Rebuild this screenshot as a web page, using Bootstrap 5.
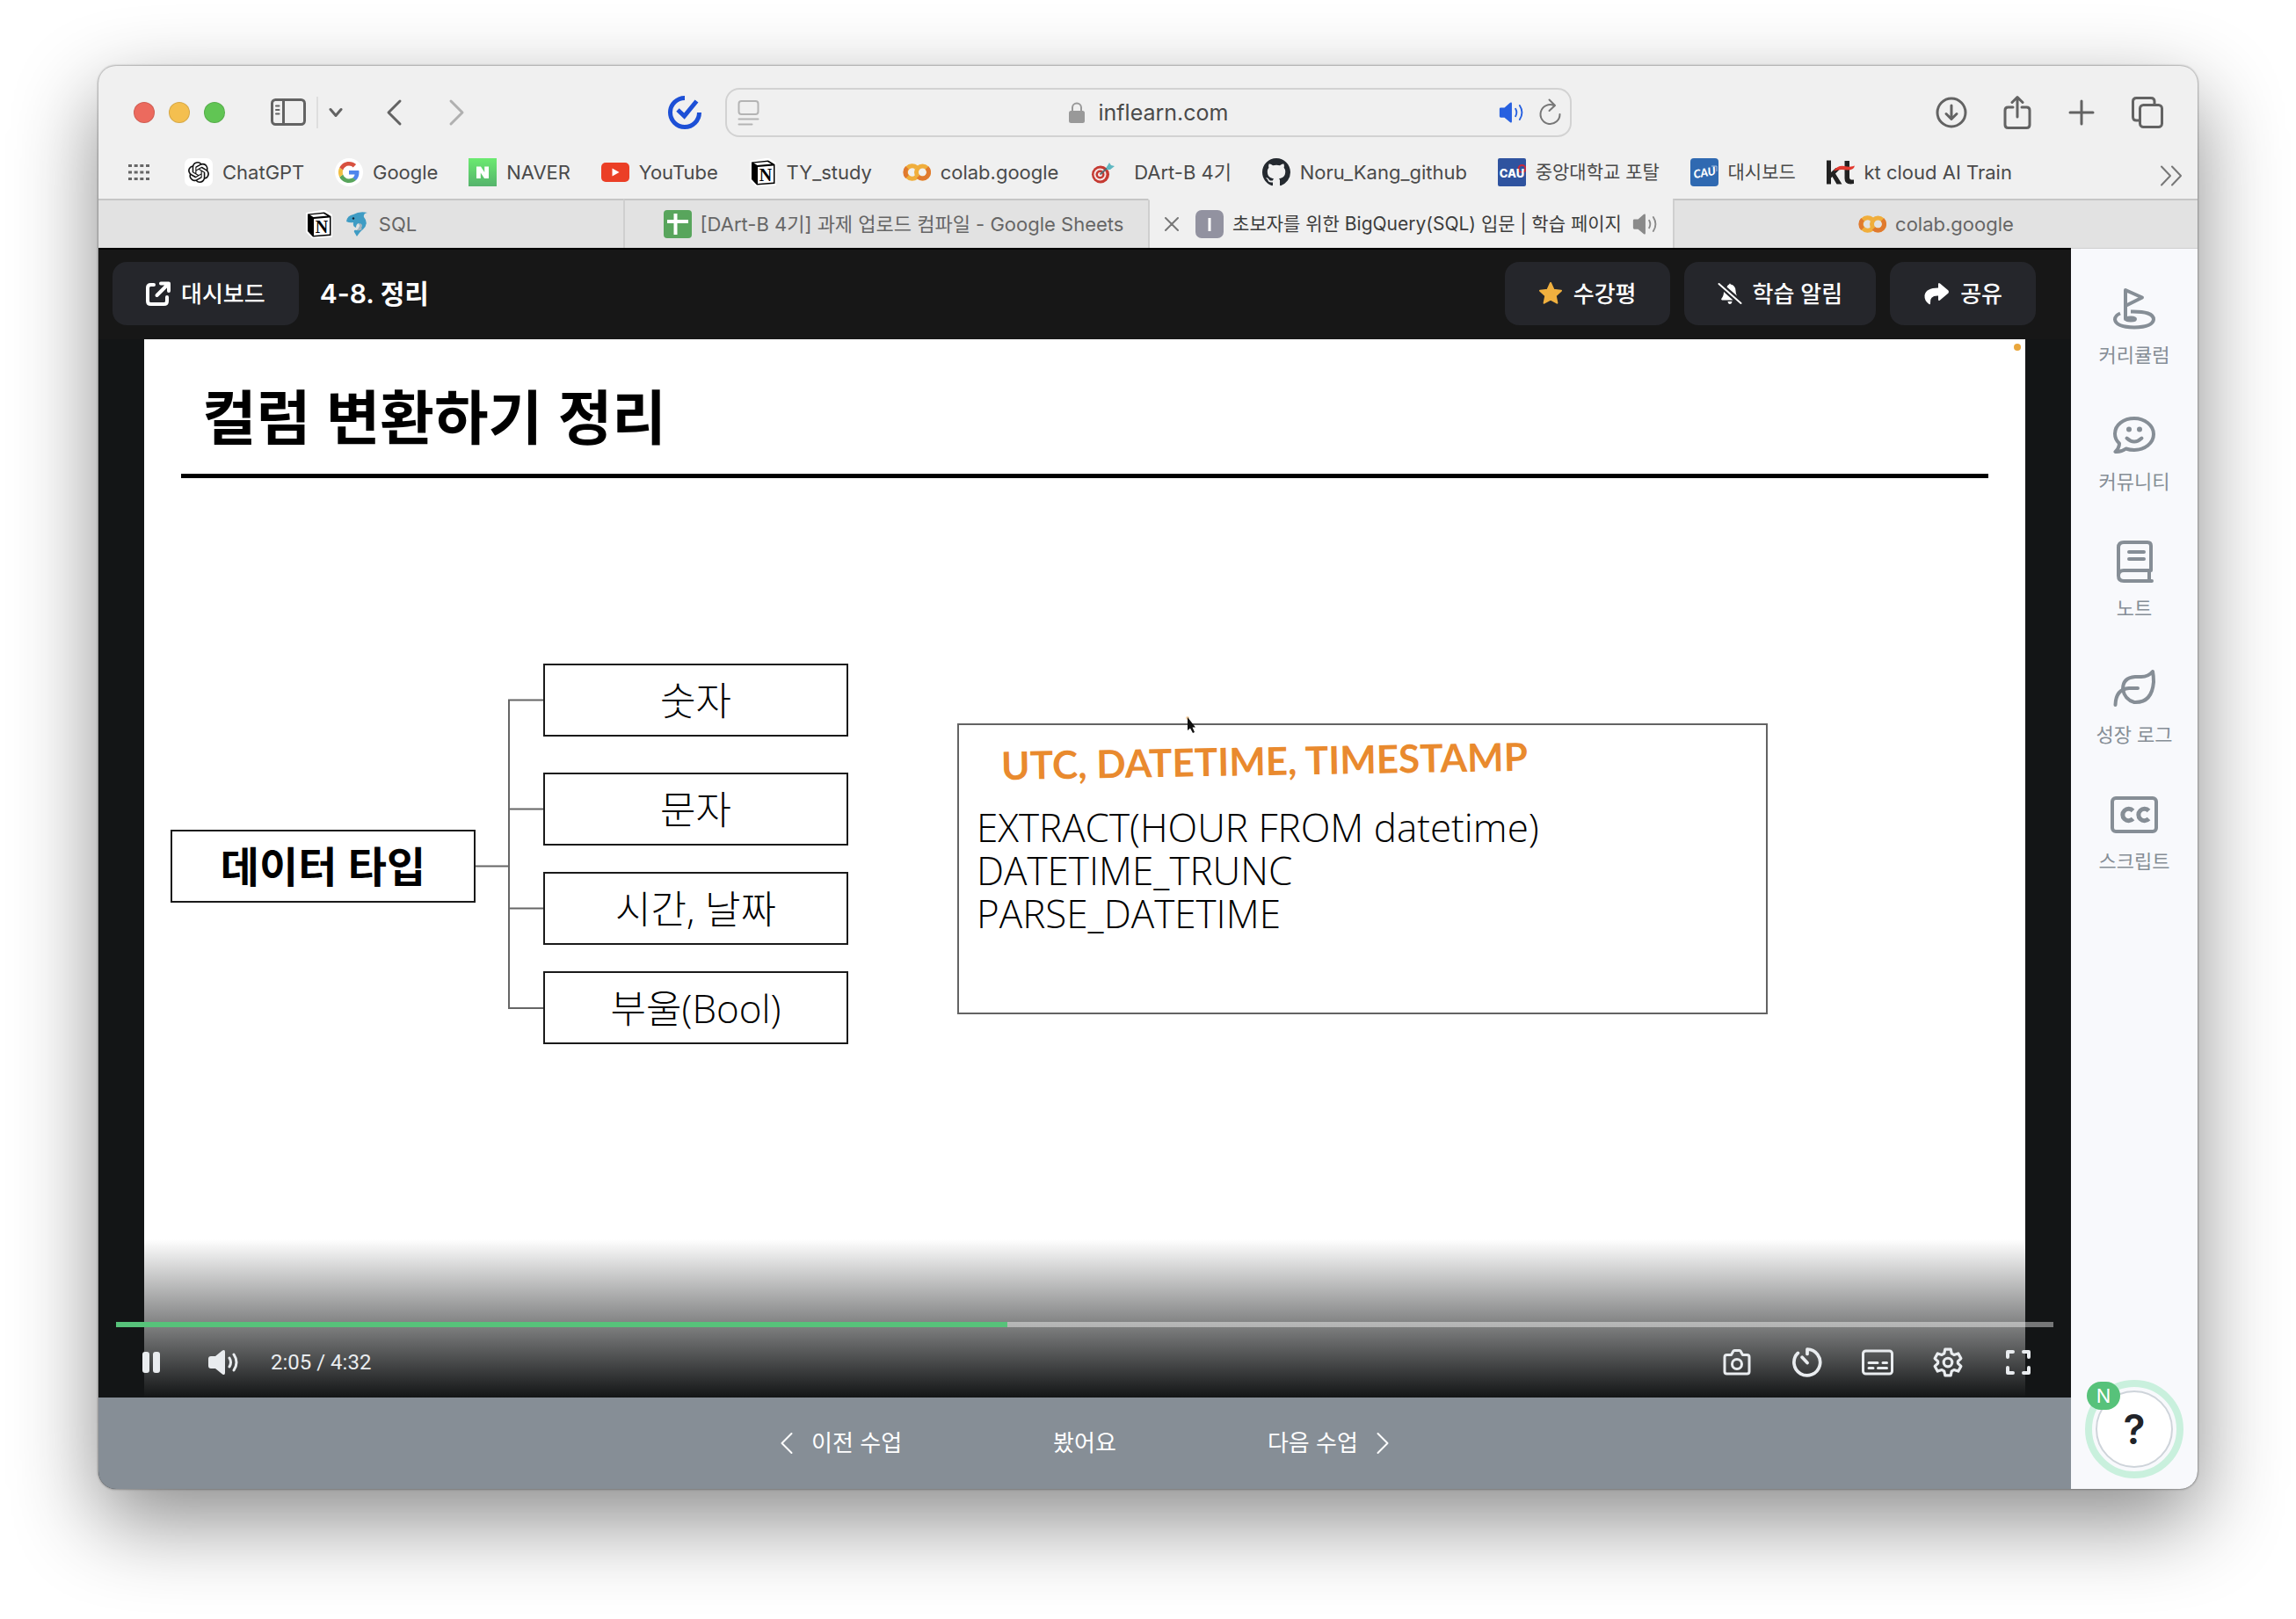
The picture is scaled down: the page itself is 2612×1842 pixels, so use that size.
<!DOCTYPE html>
<html lang="ko">
<head>
<meta charset="utf-8">
<meta name="viewport" content="width=device-width, initial-scale=1">
<title>초보자를 위한 BigQuery(SQL) 입문 | 학습 페이지</title>
<link href="https://cdn.jsdelivr.net/npm/bootstrap@5.3.0/dist/css/bootstrap.min.css" rel="stylesheet">
<style>
  body { background: #fff; font-family: "Inter", "Noto Sans CJK KR", sans-serif; font-size: 22px; line-height: 32px; color: #3c3c3c; }
  .desk { padding: 75px 112px 148px; }
  .win { border-radius: 20px; overflow: hidden; background: #f0f0f0; box-shadow: 0 0 2px 1px rgba(0,0,0,.28), 0 36px 96px rgba(0,0,0,.46); }
  svg { display: block; flex: none; }
  a { color: inherit; text-decoration: none; }
  .plain { background: none; border: 0; padding: 0; color: inherit; display: flex; align-items: center; }
  .ln { fill: none; stroke: currentColor; stroke-linecap: round; stroke-linejoin: round; }
  .hangul { font-size: 21px; }

  /* browser toolbar */
  .bar-top { height: 106px; padding: 0 39px 0 40px; color: #636363; }
  .bar-side { flex: 1 1 0; }
  .bar-end { gap: 41px; }
  .light { width: 24px; height: 24px; border-radius: 50%; border: 1px solid rgba(0,0,0,.12); }
  .split { width: 2px; height: 36px; margin: 0 8px 0 12px; background: #dedede; }
  .address { width: 963px; height: 56px; border: 2px solid #d2d2d2; border-radius: 16px; padding: 0 8px 0 12px; }
  .address input { width: 152px; border: 0; padding: 0; background: none; color: #4a4a4a; font-size: 25px; line-height: 32px; outline: 0; }
  .marks { height: 45px; padding: 0 17px 16px 34px; color: #4a4a4a; }
  .marks ul { margin: 0 168px 0 40px; }
  .marks a { gap: 11px; }
  .tabs a { height: 56px; flex: none; width: 25%; gap: 10px; background: #e2e2e2; color: #666; border-top: 2px solid #c6c6c6; border-left: 2px solid #cfcfcf; white-space: nowrap; }
  .tabs a:first-child { border-left: 0; }
  .tabs a.on { background: #f0f0f0; border-top-color: #f0f0f0; color: #3c3c3c; }

  /* lesson page */
  .lesson { background: #131516; }
  .head { background: #171717; height: 104px; padding: 0 40px 2px 16px; color: #fff; border-top: 2px solid #000; }
  .pill { height: 72px; border-radius: 16px; background: #25262b; border: 0; color: #fff; padding: 0 38px; gap: 12px; font-size: 26px; font-weight: 500; }
  .pill:hover { background: #2f3036; color: #fff; }
  .crumb { font-size: 30px; font-weight: 600; margin: 0 0 0 24px; }
  .stage { height: 1204px; padding: 0 52px; }
  .slide { height: 100%; background: #fff; color: #000; font-family: "Open Sans", "Noto Sans CJK KR", sans-serif; }
  .slide-title { margin: 0 42px; padding: 50px 24px 27px; border-bottom: 5px solid #000; font-size: 67px; line-height: 76px; font-weight: 700; }
  .board { padding: 211px 293px 0 30px; }
  .node { width: 347px; height: 83px; border: 2px solid #1a1a1a; font-size: 44px; font-weight: 300; }
  .node-root { margin-top: 189px; font-size: 48px; font-weight: 700; }
  .branches { gap: 30px; }
  .branches .node:first-child { margin-bottom: 11px; }
  .wire { stroke: #666; stroke-width: 2; fill: none; }
  .code { margin: 68px 0 0 124px; height: 331px; border: 2px solid #636363; padding: 12px 20px; font-size: 44px; line-height: 49px; font-weight: 300; }
  .ink { font-family: "Lato", "Open Sans", sans-serif; font-weight: 700; font-size: 44px; line-height: 52px; color: #e98a2e; padding: 0 28px; margin-bottom: 28px; transform: rotate(-1deg); }
  .pointer { position: absolute; left: 1188px; top: 427px; }
  .rec { position: absolute; right: 57px; top: 5px; width: 8px; height: 8px; border-radius: 50%; background: #e9a63c; }
  .shade { position: absolute; left: 0; right: 0; bottom: 0; height: 180px; padding: 94px 20px 0; background: linear-gradient(rgba(19,21,22,0), #131516); color: #e9ecef; }
  .seek { appearance: none; display: block; width: 100%; height: 6px; margin: 0; background: linear-gradient(to right, #57c27a var(--at), rgba(255,255,255,.42) var(--at)); }
  .seek::-webkit-slider-thumb { appearance: none; width: 0; height: 6px; }
  .ctl { height: 80px; padding: 0 24px 0 28px; font-family: "Roboto", sans-serif; font-size: 24px; }
  .ctl-end .plain { width: 32px; justify-content: center; }
  .clock { margin-left: 36px; }
  .foot { height: 104px; background: #868e96; color: #fff; gap: 172px; font-size: 26px; font-weight: 500; }
  .foot .plain { gap: 21px; }
  .rail { width: 144px; background: #f8f9fc; color: #868e96; padding: 44px 0 12px; border-top: 1px solid #cfcfcf; }
  .rail-links { gap: 54px; }
  .rail-links a { gap: 16px; font-size: 22px; line-height: 26px; }
  .help { position: relative; width: 112px; height: 112px; border: 8px solid #c9f0dd; border-radius: 50%; background: #f8f9fc; padding: 4px; }
  .help-core { width: 88px; height: 88px; border: 2px solid #ced4da; border-radius: 50%; background: #fff; color: #212329; font-size: 46px; font-weight: 600; }
  .help-new { position: absolute; left: -6px; top: -6px; width: 38px; height: 32px; border-radius: 16px; background: #57c27a; color: #fff; font-size: 22px; line-height: 32px; }
</style>
<script src="https://cdn.jsdelivr.net/npm/bootstrap@5.3.0/dist/js/bootstrap.bundle.min.js"></script>
</head>
<body>
<svg class="d-none" aria-hidden="true">
  <symbol id="i-notion" viewBox="0 0 32 32">
    <path d="M1 3 22-0.500 31 5V31L8 32 1 25Z" fill="#fff"/>
    <path d="M3 4.500 22 2.500 29.500 7V29L9 30.500 3 24Z" fill="#000"/>
    <path d="M5.500 5.500 21 4 25.500 6.500 9.500 8Z" fill="#fff"/><path d="M10 10 28 8.500V27.500L10 29Z" fill="#fff"/>
    <text x="19" y="25.500" text-anchor="middle" font-family="Liberation Serif, serif" font-weight="700" font-size="20" fill="#000">N</text>
  </symbol>
  <symbol id="i-colab" viewBox="0 0 32 32">
    <g fill="none" stroke-width="5"><path d="M15.500 10.500A7.300 7.300 0 1 0 15.500 21.500" stroke="#f0ae3c"/><path d="M5 10.800A7.300 7.300 0 0 0 5 21.200" stroke="#e07a2f"/>
    <circle cx="22.500" cy="16" r="7" stroke="#f0ae3c"/><path d="M27.500 11A7 7 0 0 1 17.500 21" stroke="#e07a2f"/></g>
  </symbol>
  <symbol id="i-vol" viewBox="0 0 32 32">
    <path d="M2 11.500Q2 10 3.500 10H8L15 4Q17 3 17 5V27Q17 29 15 28L8 22H3.500Q2 22 2 20.500Z" fill="currentColor"/>
    <path class="ln" stroke-width="2" d="M21.500 11.500Q24 16 21.500 20.500M26.500 7.500Q32 16 26.500 24.500"/>
  </symbol>
</svg>

<div class="desk min-vh-100">
<div class="win">
  <header>
    <div class="bar-top d-flex align-items-center">
      <div class="bar-side d-flex align-items-center">
        <div class="d-flex gap-3">
          <span class="light" style="background:#ec6a5e"></span><span class="light" style="background:#f4bf4f"></span><span class="light" style="background:#61c554"></span>
        </div>
        <button class="plain ms-5" aria-label="사이드바"><svg class="ln ms-1" width="40" height="32" viewBox="0 0 40 32" stroke-width="3"><rect x="1.500" y="1.500" width="37" height="28" rx="4"/><path d="M14.500 2V29"/><path stroke-width="2" d="M6 8.500H9.500M6 13H9.500M6 17.500H9.500"/></svg></button>
        <span class="split"></span>
        <button class="plain ms-1" aria-label="탭 그룹"><svg class="ln" width="16" height="16" viewBox="0 0 16 16" stroke-width="3"><path d="M2 4.500 8 11.500 14 4.500"/></svg></button>
        <button class="plain ms-5" aria-label="뒤로"><svg class="ln" width="20" height="32" viewBox="0 0 20 32" stroke-width="3"><path d="M17 3 4 16 17 29"/></svg></button>
        <button class="plain ms-5" aria-label="앞으로" style="color:#b0b0b0"><svg class="ln ms-1" width="20" height="32" viewBox="0 0 20 32" stroke-width="3"><path d="M3 3 16 16 3 29"/></svg></button>
        <button class="plain ms-auto" aria-label="할 일"><svg class="me-4" width="44" height="44" viewBox="0 0 44 44" fill="none" stroke="#1d50d6" stroke-width="5"><path d="M22 5.500A16.500 16.500 0 1 0 38.500 22"/><path d="M14 19 21.500 26 35.500 9"/></svg></button>
      </div>
      <form class="address d-flex align-items-center justify-content-between">
        <button type="button" class="plain" aria-label="읽기 도구" style="color:#b4b4b4"><svg class="ln" width="26" height="32" viewBox="0 0 26 32" stroke-width="2"><rect x="1.500" y="3" width="22" height="15" rx="3"/><path d="M1.500 23.500H23.500M1.500 29.500H16.500"/></svg></button>
        <div class="d-flex align-items-center ms-5 gap-3">
          <svg width="18" height="28" viewBox="0 0 18 28"><path d="M4 14V8.500a5 5 0 0 1 10 0V14" fill="none" stroke="#999" stroke-width="2"/><rect width="18" height="14" y="12" rx="2.500" fill="#999"/></svg>
          <input type="text" value="inflearn.com" aria-label="주소">
        </div>
        <div class="d-flex align-items-center gap-3">
          <button type="button" class="plain" aria-label="소리 끔" style="color:#2760e0"><svg width="30" height="30"><use href="#i-vol"/></svg></button>
          <button type="button" class="plain" aria-label="새로 고침" style="color:#777"><svg class="ln" width="28" height="32" viewBox="0 0 28 32" stroke-width="2"><path d="M24.500 18A11 11 0 1 1 18 8M12.500 1.500 19 8 12.500 14"/></svg></button>
        </div>
      </form>
      <div class="bar-side bar-end d-flex align-items-center justify-content-end">
        <button class="plain" aria-label="다운로드"><svg class="ln" width="36" height="36" viewBox="0 0 36 36" stroke-width="3"><circle cx="18" cy="18" r="16"/><path d="M18 10V25M12 19.500 18 25.500 24 19.500"/></svg></button>
        <button class="plain" aria-label="공유"><svg class="ln" width="32" height="40" viewBox="0 0 32 40" stroke-width="3"><path d="M11 14H5.500Q2 14 2 17.500V34Q2 37.500 5.500 37.500H26.500Q30 37.500 30 34V17.500Q30 14 26.500 14H21M16 25V3M10 8.500 16 2.500 22 8.500"/></svg></button>
        <button class="plain" aria-label="새 탭"><svg class="ln" width="32" height="32" viewBox="0 0 32 32" stroke-width="3"><path d="M16 3V29M3 16H29"/></svg></button>
        <button class="plain" aria-label="탭 개요"><svg class="ln" width="36" height="36" viewBox="0 0 36 36" stroke-width="3"><rect x="9.500" y="9.500" width="25" height="25" rx="4"/><path d="M9 27H5.500Q1.500 27 1.500 23V5.500Q1.500 1.500 5.500 1.500H22Q26 1.500 26 5.500V9"/></svg></button>
      </div>
    </div>

    <nav class="marks d-flex align-items-center" aria-label="즐겨찾기">
      <svg width="24" height="18" viewBox="0 0 24 18"><path d="M0 1.500H24M0 9H24M0 16.500H24" stroke="#666" stroke-width="3" stroke-dasharray="4 2.660"/></svg>
      <ul class="list-unstyled d-flex justify-content-between flex-fill">
        <li><a href="#" class="d-flex align-items-center"><svg width="32" height="32" viewBox="0 0 32 32"><rect width="32" height="32" rx="7" fill="#fff"/><path transform="translate(4 4)" d="M22.282 9.821a5.985 5.985 0 0 0-.516-4.911 6.046 6.046 0 0 0-6.510-2.900A6.065 6.065 0 0 0 4.981 4.182a5.985 5.985 0 0 0-3.998 2.900 6.046 6.046 0 0 0 .743 7.097 5.980 5.980 0 0 0 .511 4.911 6.051 6.051 0 0 0 6.515 2.900A5.985 5.985 0 0 0 13.260 24a6.056 6.056 0 0 0 5.772-4.206 5.989 5.989 0 0 0 3.998-2.900 6.056 6.056 0 0 0-.748-7.073zM13.260 22.430a4.476 4.476 0 0 1-2.876-1.041l.142-.080 4.778-2.758a.795.795 0 0 0 .393-.681v-6.737l2.020 1.169a.071.071 0 0 1 .038.052v5.583a4.504 4.504 0 0 1-4.495 4.494zM3.599 18.304a4.471 4.471 0 0 1-.535-3.014l.142.085 4.783 2.758a.771.771 0 0 0 .781 0l5.843-3.369v2.332a.080.080 0 0 1-.033.062L9.740 19.950a4.499 4.499 0 0 1-6.141-1.646zM2.341 7.896a4.485 4.485 0 0 1 2.366-1.973V11.600a.766.766 0 0 0 .388.677l5.814 3.354-2.020 1.169a.076.076 0 0 1-.071 0l-4.830-2.787A4.504 4.504 0 0 1 2.341 7.872zM18.937 11.752 13.104 8.364 15.119 7.200a.076.076 0 0 1 .071 0l4.830 2.791a4.494 4.494 0 0 1-.677 8.104v-5.677a.790.790 0 0 0-.407-.667zM20.948 8.729l-.142-.085-4.774-2.782a.776.776 0 0 0-.785 0L9.409 9.230V6.897a.066.066 0 0 1 .028-.062l4.830-2.787a4.499 4.499 0 0 1 6.680 4.660zM8.307 12.863l-2.020-1.164a.080.080 0 0 1-.038-.057V6.074a4.499 4.499 0 0 1 7.376-3.454l-.142.081L8.704 5.459a.795.795 0 0 0-.393.681zM9.404 10.498l2.602-1.500 2.607 1.500v2.999l-2.597 1.500-2.607-1.500Z" fill="#111"/></svg>ChatGPT</a></li>
        <li><a href="#" class="d-flex align-items-center"><svg width="32" height="32" viewBox="0 0 32 32"><circle cx="16" cy="16" r="16" fill="#fff"/><g transform="translate(4 4)"><path fill="#4f86ec" d="M23.500 12.300c0-.9-.1-1.500-.2-2.200H12v4.500h6.500c-.1 1.100-.8 2.700-2.400 3.800l3.700 2.900c2.300-2.100 3.700-5.200 3.700-9z"/><path fill="#58a55c" d="M12 24c3.200 0 6-1.100 7.900-2.900l-3.700-2.900c-1 .7-2.400 1.200-4.200 1.200-3.200 0-5.900-2.100-6.800-5l-3.900 3C3.200 21.300 7.300 24 12 24z"/><path fill="#f1be42" d="M5.200 14.400c-.3-.8-.4-1.600-.4-2.400s.1-1.600.4-2.400l-3.900-3C.5 8.200 0 10 0 12s.5 3.800 1.300 5.400z"/><path fill="#d85140" d="M12 4.600c2.300 0 3.800 1 4.700 1.800l3.400-3.300C18 1.200 15.200 0 12 0 7.300 0 3.200 2.700 1.300 6.600l3.900 3c1-2.900 3.600-5 6.800-5z"/></g></svg>Google</a></li>
        <li><a href="#" class="d-flex align-items-center"><svg width="32" height="32" viewBox="0 0 32 32"><defs><linearGradient id="nv" x2="0" y2="1"><stop stop-color="#6bea70"/><stop offset="1" stop-color="#55b36c"/></linearGradient></defs><path fill="url(#nv)" d="M0 0H32V32H0Z"/><path fill="#fff" d="M9 9.500H14L18.200 16V9.500H23V23H18L13.800 16.500V23H9Z"/></svg>NAVER</a></li>
        <li><a href="#" class="d-flex align-items-center"><svg width="32" height="32" viewBox="0 0 32 32"><rect y="5" width="32" height="22" rx="5" fill="#eb3f26"/><path d="M12.500 11.500V20.500L20.500 16Z" fill="#fff"/></svg>YouTube</a></li>
        <li><a href="#" class="d-flex align-items-center"><svg width="32" height="32"><use href="#i-notion"/></svg>TY_study</a></li>
        <li><a href="#" class="d-flex align-items-center"><svg width="32" height="32"><use href="#i-colab"/></svg>colab.google</a></li>
        <li><a href="#" class="d-flex align-items-center"><svg class="me-2" width="32" height="32" viewBox="0 0 32 32"><circle cx="13" cy="18.500" r="10" fill="#c53a32"/><circle cx="12.500" cy="18.500" r="7" fill="#f5e6e6"/><circle cx="12.500" cy="18.500" r="5" fill="#c53a32"/><circle cx="12.500" cy="18.500" r="2.500" fill="#f5e6e6"/><path d="M12.500 18.500 23 9" stroke="#596a70" stroke-width="2"/><path d="M20 10 23 5 25 8 29 9 24 13 20 13Z" fill="#5fb8c2"/></svg>DArt-B 4기</a></li>
        <li><a href="#" class="d-flex align-items-center"><svg width="32" height="32" viewBox="0 0 16 16"><path fill="#24292f" d="M8 0C3.580 0 0 3.580 0 8c0 3.540 2.290 6.530 5.470 7.590.4.070.55-.17.55-.38 0-.19-.01-.82-.01-1.490-2.010.37-2.530-.49-2.690-.94-.09-.23-.48-.94-.82-1.130-.28-.15-.68-.52-.01-.53.63-.01 1.080.58 1.230.82.72 1.210 1.870.87 2.330.66.070-.52.28-.87.51-1.070-1.780-.2-3.640-.89-3.640-3.950 0-.87.31-1.590.82-2.150-.08-.2-.36-1.020.080-2.120 0 0 .67-.21 2.200.82.64-.18 1.320-.27 2-.27s1.360.090 2 .27c1.530-1.040 2.200-.82 2.200-.82.44 1.100.16 1.920.080 2.120.51.56.82 1.270.82 2.150 0 3.070-1.870 3.750-3.650 3.950.29.25.54.73.54 1.480 0 1.070-.01 1.930-.01 2.200 0 .21.15.46.55.38A8.010 8.010 0 0 0 16 8c0-4.420-3.580-8-8-8"/></svg>Noru_Kang_github</a></li>
        <li><a href="#" class="hangul d-flex align-items-center"><svg width="32" height="32" viewBox="0 0 32 32"><rect width="32" height="32" rx="2" fill="#2f539f"/><circle cx="27.500" cy="12" r="4" fill="none" stroke="#c8283c" stroke-width="2"/><text x="16" y="22" text-anchor="middle" font-family="Inter, sans-serif" font-size="13" font-weight="800" fill="#fff">CAU</text></svg>중앙대학교 포탈</a></li>
        <li><a href="#" class="hangul d-flex align-items-center"><svg width="32" height="32" viewBox="0 0 32 32"><rect width="32" height="32" rx="4" fill="#2f69b1"/><path d="M24 9H30V15" fill="none" stroke="#a9c6e6"/><text transform="rotate(-10 16 16)" x="16" y="21" text-anchor="middle" font-family="Lato, sans-serif" font-size="13" font-style="italic" font-weight="900" fill="#fff">CAU</text></svg>대시보드</a></li>
        <li><a href="#" class="d-flex align-items-center"><svg width="32" height="32" viewBox="0 0 32 32"><g fill="#222"><path d="M0 2.500H5V16L10.500 11H16.500L10 17.500 17.500 29.500H11.500L6.500 21 5 22.500V29.500H0Z"/><path d="M20.500 3H26V22Q26 25 31 24.500V29Q20.500 31 20.500 23Z"/></g><path d="M8 14.500Q12 8 20 9 28 10.500 32 8.500 31 13.500 24 13.500 14 12 8 14.500Z" fill="#e3392f"/></svg>kt cloud AI Train</a></li>
      </ul>
      <button class="plain mt-2" aria-label="더 보기" style="color:#777"><svg class="ln" width="26" height="24" viewBox="0 0 26 24" stroke-width="2"><path d="M2 1.500 12 12 2 22.500M14 1.500 24 12 14 22.500"/></svg></button>
    </nav>

    <nav class="tabs d-flex" aria-label="탭">
      <a href="#" class="d-flex align-items-center justify-content-center"><svg width="32" height="32"><use href="#i-notion"/></svg>
        <svg class="ms-1" width="28" height="30" viewBox="0 0 28 30"><path d="M1 12Q2 5 9 4Q16 0 25 2Q20 3 21 7Q27 14 20 21Q17 23 13 29L10 24Q9 21 13 22Q18 18 15 14Q12 15 12 19 8 18 9 13Q5 14 1 12Z" fill="#3f9cc4"/><path d="M15 14Q18 18 13 22Q17 23 20 20 17 22 19 17Q19 14 15 14Z" fill="#a9b5bd"/><circle cx="9" cy="8.500" r="1.200" fill="#123"/></svg>SQL</a>
      <a href="#" class="d-flex align-items-center justify-content-center ps-3"><svg width="32" height="32" viewBox="0 0 32 32"><rect width="32" height="32" rx="4" fill="#58a55c"/><path d="M13.500 4V28M4 13H28" stroke="#fff" stroke-width="4"/></svg>[DArt-B 4기] 과제 업로드 컴파일 - Google Sheets</a>
      <a href="#" class="on hangul d-flex align-items-center justify-content-center" aria-current="page"><svg class="ln me-2" width="18" height="18" viewBox="0 0 18 18" stroke-width="2" color="#777"><path d="M2 2 16 16M16 2 2 16"/></svg><svg width="32" height="32" viewBox="0 0 32 32"><rect width="32" height="32" rx="7" fill="#9292a0"/><path d="M16 9V24" stroke="#fff" stroke-width="3"/></svg><span>초보자를 위한 BigQuery(SQL) 입문 | 학습 페이지</span><svg width="32" height="30" style="color:#8a8a8a"><use href="#i-vol"/></svg></a>
      <a href="#" class="d-flex align-items-center justify-content-center"><svg width="32" height="32"><use href="#i-colab"/></svg>colab.google</a>
    </nav>
  </header>

  <div class="lesson d-flex">
    <main class="flex-fill">
      <div class="head d-flex align-items-center">
        <button class="btn pill d-flex align-items-center"><svg class="ln" width="28" height="28" viewBox="0 0 28 28" stroke-width="4"><path d="M9 4H5.500Q2 4 2 7.500V22.500Q2 26 5.500 26H20.500Q24 26 24 22.500V18M17 2.500H26V11M25 3.500 12.500 16"/></svg>대시보드</button>
        <h1 class="crumb">4-8. 정리</h1>
        <div class="d-flex gap-3 ms-auto">
          <button class="btn pill d-flex align-items-center"><svg width="28" height="28" viewBox="0 0 28 28"><path d="M14 2 17.500 9.700 26 10.700 19.700 16.400 21.400 24.700 14 20.600 6.600 24.700 8.300 16.400 2 10.700 10.500 9.700Z" fill="#f0b03f" stroke="#f0b03f" stroke-width="2" stroke-linejoin="round"/></svg>수강평</button>
          <button class="btn pill d-flex align-items-center"><svg width="28" height="28" viewBox="0 0 28 28" fill="#fff"><path d="M10.500 6.500Q11.500 4 13.200 3.600 14 1.500 14.800 3.600 20 4.500 20.500 10.500 20.500 14 22 16.500ZM7 12 17.500 21.500H5Q3.500 21 4.500 19.500 7 17 7 12ZM11.500 23H16.500Q16 26 14 26 12 26 11.500 23Z"/><path d="M1.500 3 26.500 25" stroke="#fff" stroke-width="2" stroke-linecap="round"/></svg>학습 알림</button>
          <button class="btn pill d-flex align-items-center"><svg width="30" height="28" viewBox="0 0 30 28"><path d="M17 3.500Q17 1 19 2.500L28.500 10.500Q29.500 12 28.500 13.500L19 21.500Q17 23 17 20.500V16.500Q7 16 8 25 8.200 27 6.500 26 1 22 1.500 16 3 7.500 17 7.500Z" fill="#fff"/></svg>공유</button>
        </div>
      </div>

      <div class="stage position-relative">
        <section class="slide">
          <h2 class="slide-title">컬럼 변환하기 정리</h2>
          <div class="board d-flex align-items-start">
            <div class="node node-root d-flex align-items-center justify-content-center flex-shrink-0">데이터 타입</div>
            <svg width="77" height="433" viewBox="0 0 77 433"><path class="wire" d="M0 230.500H38M77 41.500H38V392H77M38 165.500H77M38 278.500H77"/></svg>
            <div class="branches d-flex flex-column">
              <div class="node d-flex align-items-center justify-content-center">숫자</div>
              <div class="node d-flex align-items-center justify-content-center">문자</div>
              <div class="node d-flex align-items-center justify-content-center">시간, 날짜</div>
              <div class="node d-flex align-items-center justify-content-center">부울(Bool)</div>
            </div>
            <div class="code flex-fill">
              <div class="ink">UTC, DATETIME, TIMESTAMP</div>
              <div>EXTRACT(HOUR FROM datetime)</div>
              <div>DATETIME_TRUNC</div>
              <div>PARSE_DATETIME</div>
            </div>
          </div>
        </section>
        <svg class="pointer" width="60" height="24" viewBox="0 0 60 24"><circle cx="51" cy="4" r="2" fill="#f3cfa5"/><path d="M51 3V18L54 15.500 57 21 59 20 56.500 14.500H60Z" fill="#111"/></svg>
        <span class="rec"></span>
        <div class="shade">
          <input class="seek" type="range" min="0" max="272" value="125" aria-label="재생 위치" style="--at:46%">
          <div class="ctl d-flex align-items-center">
            <button class="plain" aria-label="일시 정지"><svg width="24" height="28" viewBox="0 0 24 28" fill="#e9ecef"><rect x="2" y="2" width="8" height="24" rx="3"/><rect x="14" y="2" width="8" height="24" rx="3"/></svg></button>
            <button class="plain ms-5" aria-label="음량"><svg class="ms-1" width="36" height="32" viewBox="0 0 36 32"><path d="M1 12Q1 9 4 9H9L17 2.500Q20 1 20 4V28Q20 31 17 29.500L9 23H4Q1 23 1 20Z" fill="#e9ecef"/><path class="ln" stroke-width="3" d="M25 11Q28 16 25 21M30 7Q36 16 30 25"/></svg></button>
            <span class="clock">2:05 / 4:32</span>
            <div class="ctl-end d-flex ms-auto gap-5">
              <button class="plain" aria-label="화면 캡처"><svg class="ln" width="34" height="32" viewBox="0 0 32 32" stroke-width="3"><path d="M2 10Q2 7.500 4.500 7.500H9.500L12 3Q12.500 2.500 13.500 2.500H18.500Q19.500 2.500 20 3L22.500 7.500H27.500Q30 7.500 30 10V26.500Q30 29 27.500 29H4.500Q2 29 2 26.500Z"/><circle cx="16" cy="18" r="5.500"/></svg></button>
              <button class="plain" aria-label="배속"><svg class="ln" width="34" height="34" viewBox="0 0 32 32" stroke-width="3.500"><path d="M6 6A14 14 0 1 0 16 2V7M10.500 10.500 16 16.500"/></svg></button>
              <button class="plain" aria-label="자막"><svg class="ln" width="36" height="32" viewBox="0 0 36 32" stroke-width="3"><rect x="1.500" y="3" width="33" height="26" rx="3"/><path d="M8 16.500H18M24 16.500H28.500M8 22.500H13M18.500 22.500H28.500"/></svg></button>
              <button class="plain" aria-label="설정"><svg class="ln" width="34" height="34" viewBox="0 0 32 32" stroke-width="3"><path d="M13 2H19L20 6.500 22.500 8 27 6.500 30 11.800 26.700 15V17L30 20.200 27 25.500 22.500 24 20 25.500 19 30H13L12 25.500 9.500 24 5 25.500 2 20.200 5.300 17V15L2 11.800 5 6.500 9.500 8 12 6.500Z"/><circle cx="16" cy="16" r="4.500"/></svg></button>
              <button class="plain" aria-label="전체 화면"><svg class="ln" width="32" height="32" viewBox="0 0 32 32" stroke-width="4"><path d="M4 10V4H10M22 4H28V10M28 22V28H22M10 28H4V22"/></svg></button>
            </div>
          </div>
        </div>
      </div>

      <div class="foot d-flex align-items-center justify-content-center">
        <button class="plain"><svg class="ln" width="14" height="26" viewBox="0 0 14 26" stroke-width="2"><path d="M12.500 2 1.500 13 12.500 24"/></svg>이전 수업</button>
        <button class="plain">봤어요</button>
        <button class="plain">다음 수업<svg class="ln" width="14" height="26" viewBox="0 0 14 26" stroke-width="2"><path d="M1.500 2 12.500 13 1.500 24"/></svg></button>
      </div>
    </main>

    <aside class="rail d-flex flex-column align-items-center">
      <nav class="rail-links d-flex flex-column" aria-label="학습 도구">
        <a href="#" class="d-flex flex-column align-items-center"><svg class="ln" width="48" height="48" viewBox="0 0 48 48" stroke-width="4"><path d="M14 36V3L33 11.500 14 21"/><path d="M20 27.500Q46 27 46 36.500 45 45 24 45.500 3 45 2 36.500 2 32 8 29.500" stroke-linecap="butt"/><ellipse cx="20" cy="36" rx="5" ry="1.500"/></svg>커리큘럼</a>
        <a href="#" class="d-flex flex-column align-items-center"><svg class="ln" width="48" height="48" viewBox="0 0 48 48" stroke-width="4"><path d="M24 5C12 5 2 12 2 22.500Q2 29 7 33.500 7 39 2.500 43 9 43.500 14.500 39.500 19 41 24 41C36 41 46 33 46 23S36 5 24 5Z"/><path d="M15.500 27.500Q24 35.500 32.500 27.500"/><g fill="currentColor" stroke="none"><circle cx="18" cy="17.500" r="3"/><circle cx="30" cy="17.500" r="3"/></g></svg>커뮤니티</a>
        <a href="#" class="d-flex flex-column align-items-center"><svg class="ln" width="48" height="48" viewBox="0 0 48 48" stroke-width="4"><path d="M44 46H12Q6 46 6 40V8Q6 2 12 2H39Q43 2 43 6V34H12Q6 34 6 40M41 35V45"/><path d="M18 13H35M18 21H35"/></svg>노트</a>
        <a href="#" class="d-flex flex-column align-items-center"><svg class="ln" width="48" height="48" viewBox="0 0 48 48" stroke-width="4"><path d="M45 5Q40 11 32 11H25Q11 12 11 25 13 37 24 40 44 41 46 17 46 10 45 5Z"/><path d="M2.500 43Q3 25 18 24H28"/></svg>성장 로그</a>
        <a href="#" class="d-flex flex-column align-items-center"><svg class="ln" width="56" height="48" viewBox="0 0 56 48" stroke-width="4"><rect x="3" y="5" width="50" height="38" rx="4"/><g stroke-linecap="butt" stroke-width="5"><path d="M26.500 19.500A6.700 6.700 0 1 0 26.500 28.500M44.500 19.500A6.700 6.700 0 1 0 44.500 28.500"/></g></svg>스크립트</a>
      </nav>
      <button class="help mt-auto" aria-label="도움말"><span class="help-core d-flex align-items-center justify-content-center">?</span><span class="help-new">N</span></button>
    </aside>
  </div>
</div>
</div>
</body>
</html>
